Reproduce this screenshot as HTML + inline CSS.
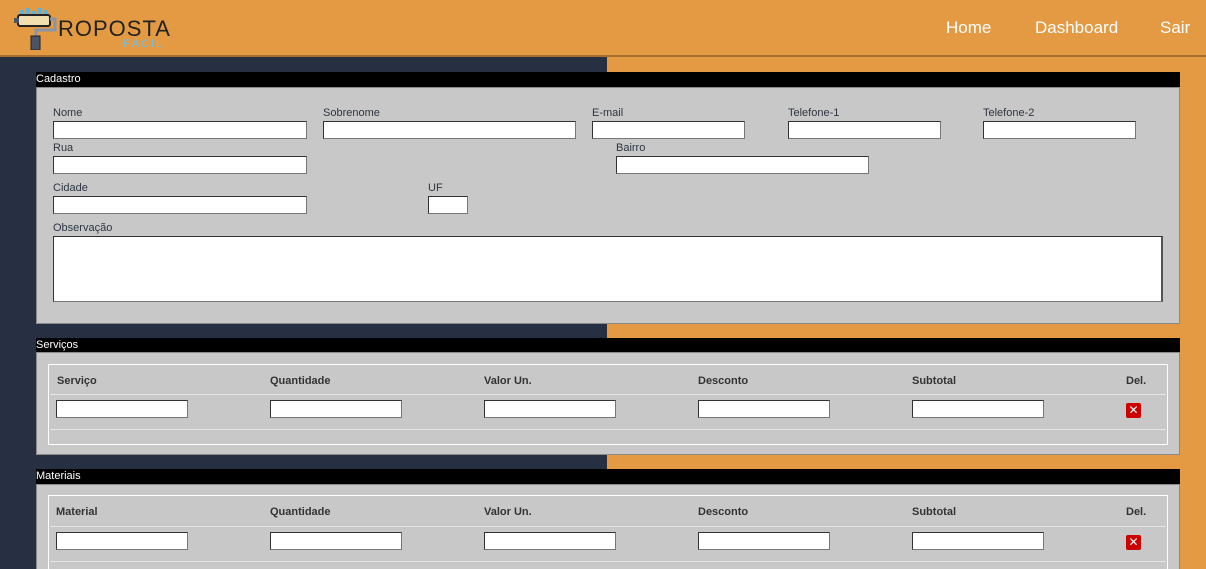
<!DOCTYPE html>
<html style="overflow:hidden;width:1206px;height:569px"><head><meta charset="utf-8"><style>
*{box-sizing:border-box;margin:0;padding:0}
body{width:1206px;height:569px;overflow:hidden;position:relative;font-family:"Liberation Sans",Arial,sans-serif;background:#e39a43}
.a{position:absolute}
.dark{left:0;top:57px;width:607px;height:512px;background:#263042}
.hdr{left:0;top:0;width:1206px;height:57px;background:#e39a43;border-bottom:2px solid #a8702f}
.nav{color:#fff;font-size:17px;top:18px}
.tt{background:#000;color:#fff;font-size:11px;height:15px;line-height:15px;left:36px;width:1144px}
.pn{background:#c8c8c8;border:1px solid #8a8a8a;left:36px;width:1144px}
.lb{font-size:11px;color:#2d3642}
.in{background:#fff;border:1px solid #767676;border-top-color:#333;border-left-color:#333;height:18px}
.tb{border:1px solid #fff;left:48px;width:1120px}
.th{font-size:11px;font-weight:bold;color:#333}
.ln{height:1px;background:#e4e4e4;left:50px;width:1116px}
.x{width:15px;height:15px;background:#cc0000;border-radius:2px;color:#fff;font-size:12px;line-height:15px;text-align:center;left:1126px}
</style></head><body>
<div class="a dark"></div>
<div class="a hdr"></div>
<svg class="a" style="left:14px;top:4px" width="46" height="46" viewBox="0 0 46 46">
<path d="M8 12v-6M14 12v-8M20 12v-5M26 12v-8M32 12v-6" stroke="#5ab4e0" stroke-width="4"/>
<rect x="4" y="11" width="32" height="11" rx="2" fill="#f2dfb0" stroke="#222" stroke-width="2"/>
<path d="M36 15h5v11H22v6" stroke="#8a94a8" stroke-width="3" fill="none"/>
<rect x="17" y="32" width="9" height="14" fill="#4a5468" stroke="#222"/>
<rect x="0" y="14" width="5" height="5" fill="#4a5468"/>
</svg>
<div class="a" style="left:58px;top:16px;font-size:22px;letter-spacing:1px;color:#222">ROPOSTA</div>
<div class="a" style="left:123px;top:38px;font-size:11px;letter-spacing:2px;color:#6fc0e6">FÁCIL</div>
<div class="a nav" style="left:946px">Home</div>
<div class="a nav" style="left:1035px">Dashboard</div>
<div class="a nav" style="left:1160px">Sair</div>

<div class="a tt" style="top:72px">Cadastro</div>
<div class="a pn" style="top:87px;height:237px"></div>
<div class="a lb" style="left:53px;top:107px">Nome</div><div class="a in" style="left:53px;top:121px;width:254px"></div>
<div class="a lb" style="left:323px;top:107px">Sobrenome</div><div class="a in" style="left:323px;top:121px;width:253px"></div>
<div class="a lb" style="left:592px;top:107px">E-mail</div><div class="a in" style="left:592px;top:121px;width:153px"></div>
<div class="a lb" style="left:788px;top:107px">Telefone-1</div><div class="a in" style="left:788px;top:121px;width:153px"></div>
<div class="a lb" style="left:983px;top:107px">Telefone-2</div><div class="a in" style="left:983px;top:121px;width:153px"></div>
<div class="a lb" style="left:53px;top:142px">Rua</div><div class="a in" style="left:53px;top:156px;width:254px"></div>
<div class="a lb" style="left:616px;top:142px">Bairro</div><div class="a in" style="left:616px;top:156px;width:253px"></div>
<div class="a lb" style="left:53px;top:182px">Cidade</div><div class="a in" style="left:53px;top:196px;width:254px"></div>
<div class="a lb" style="left:428px;top:182px">UF</div><div class="a in" style="left:428px;top:196px;width:40px"></div>
<div class="a lb" style="left:53px;top:222px">Observação</div><div class="a in" style="left:53px;top:236px;width:1110px;height:66px;border-right:2px solid #555"></div>

<div class="a tt" style="top:338px">Serviços</div>
<div class="a pn" style="top:352px;height:103px"></div>
<div class="a tb" style="top:364px;height:81px"></div>
<div class="a th" style="left:57px;top:375px">Serviço</div>
<div class="a th" style="left:270px;top:375px">Quantidade</div>
<div class="a th" style="left:484px;top:375px">Valor Un.</div>
<div class="a th" style="left:698px;top:375px">Desconto</div>
<div class="a th" style="left:912px;top:375px">Subtotal</div>
<div class="a th" style="left:1126px;top:375px">Del.</div>
<div class="a ln" style="top:394px"></div>
<div class="a in" style="left:56px;top:400px;width:132px"></div>
<div class="a in" style="left:270px;top:400px;width:132px"></div>
<div class="a in" style="left:484px;top:400px;width:132px"></div>
<div class="a in" style="left:698px;top:400px;width:132px"></div>
<div class="a in" style="left:912px;top:400px;width:132px"></div>
<div class="a x" style="top:403px">✕</div>
<div class="a ln" style="top:429px"></div>

<div class="a tt" style="top:469px">Materiais</div>
<div class="a pn" style="top:484px;height:85px;border-bottom:none"></div>
<div class="a tb" style="top:495px;height:74px;border-bottom:none"></div>
<div class="a th" style="left:56px;top:506px">Material</div>
<div class="a th" style="left:270px;top:506px">Quantidade</div>
<div class="a th" style="left:484px;top:506px">Valor Un.</div>
<div class="a th" style="left:698px;top:506px">Desconto</div>
<div class="a th" style="left:912px;top:506px">Subtotal</div>
<div class="a th" style="left:1126px;top:506px">Del.</div>
<div class="a ln" style="top:526px"></div>
<div class="a in" style="left:56px;top:532px;width:132px"></div>
<div class="a in" style="left:270px;top:532px;width:132px"></div>
<div class="a in" style="left:484px;top:532px;width:132px"></div>
<div class="a in" style="left:698px;top:532px;width:132px"></div>
<div class="a in" style="left:912px;top:532px;width:132px"></div>
<div class="a x" style="top:535px">✕</div>
<div class="a ln" style="top:561px"></div>
</body></html>
